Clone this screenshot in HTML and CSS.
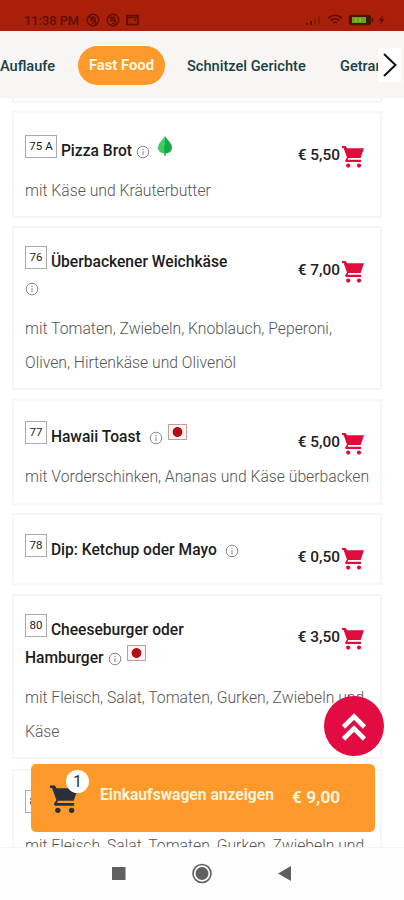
FILE: index.html
```html
<!DOCTYPE html>
<html lang="de">
<head>
<meta charset="utf-8">
<title>Speisekarte</title>
<link rel="stylesheet" href="styles.css">
</head>
<body>
<svg class="defs" width="0" height="0">
  <symbol id="cart" viewBox="0 0 22 23">
    <path fill="currentColor" d="M0 0h3.600l1.600 2.200H22L18.600 12H6.200l-.6 1.800H19v2.200H3.800L3 14.700l2-3.200L1.600 2H0z"/>
    <circle fill="currentColor" cx="6.200" cy="19.600" r="2.100"/><circle fill="currentColor" cx="17" cy="19.600" r="2.100"/>
  </symbol>
  <symbol id="info" viewBox="0 0 14 14">
    <circle cx="7" cy="7" r="5.800" fill="none" stroke="#888" stroke-width="1"/>
    <path d="M7 6.300v3.600M7 4v1.200" stroke="#888" stroke-width="1.100"/>
  </symbol>
  <symbol id="mute" viewBox="0 0 14 14">
    <circle cx="7" cy="7" r="5.800" fill="none" stroke="currentColor" stroke-width="1.400"/>
    <path d="M4.500 8.500c1 0 1-5 3-4.500s1.500 3 2 4.500M6 10.200h2M3 3l8 8" fill="none" stroke="currentColor" stroke-width="1.500"/>
  </symbol>
</svg>
<div class="screen">
  <header class="status">
    <span class="time">11:38 PM</span>
    <svg class="s-icon" width="14" height="14"><use href="#mute"/></svg>
    <svg class="s-icon" width="14" height="14"><use href="#mute"/></svg>
    <svg class="s-icon" width="13" height="12" viewBox="0 0 13 12"><path d="M1 1.500h11v9H1zM1 3.500h11M8 6h2" fill="none" stroke="currentColor" stroke-width="1.700"/></svg>
    <svg class="signals" width="80" height="14" viewBox="0 0 80 14">
      <path d="M1 12V10h2v2zM5 12V8h2v4z" fill="#5c1005"/><path d="M9 12V5h2v7zM13 12V3h2v9z" fill="#8f1b08"/>
      <path d="M23 5q7-5.500 14 0M25.500 7.500q4.500-3.500 9 0M28 10q2-1.500 4 0" fill="none" stroke="#5c1005" stroke-width="1.700"/>
      <rect x="44.500" y="2.500" width="21" height="9" rx="2.500" fill="#3c1808" stroke="#5c1005" stroke-width="1.500"/>
      <rect x="47" y="4" width="14" height="6" fill="#67a51c"/><path d="M51 5v4M55 5v4" stroke="#8bd32c"/>
      <path d="M67.500 5v4" stroke="#5c1005" stroke-width="1.500"/>
      <path d="M78 2l-4.500 5.500h2.500L75 12l4.500-6H77z" fill="#5c1005"/>
    </svg>
  </header>
  <nav class="tabs">
    <span class="tab tab-first">Auflaufe</span>
    <span class="tab active">Fast Food</span>
    <span class="tab tab-third">Schnitzel Gerichte</span>
    <span class="tab tab-last">Getranke</span>
    <span class="next"><svg width="22" height="34" viewBox="0 0 22 34"><path d="M4 6l11.500 11L4 28" fill="none" stroke="#111" stroke-width="2"/></svg></span>
  </nav>
  <main class="list">
    <section class="card stub"></section>
    <section class="card c75">
      <div class="info"><h2><span class="num">75 A</span> <span>Pizza Brot</span><svg class="i" width="14" height="14"><use href="#info"/></svg><svg class="leaf" width="16" height="20" viewBox="0 0 16 20"><path d="M8 0C6 4 1 7 1 11.500 1 16 5 17.500 8 17.500z" fill="#39cf64"/><path d="M8 0c2 4 7 7 7 11.500 0 4.500-4 6-7 6z" fill="#17aa45"/><path d="M8 9v11" stroke="#109b45" stroke-width="1.200"/></svg></h2>
      <p>mit Käse und Kräuterbutter</p></div>
      <div class="price">€ 5,50<svg width="22" height="23"><use href="#cart"/></svg></div>
    </section>
    <section class="card c76">
      <div class="info"><h2><span class="num">76</span> <span>Überbackener Weichkäse</span><br><svg class="i lead" width="14" height="14"><use href="#info"/></svg></h2>
      <p>mit Tomaten, Zwiebeln, Knoblauch, Peperoni,<br>Oliven, Hirtenkäse und Olivenöl</p></div>
      <div class="price">€ 7,00<svg width="22" height="23"><use href="#cart"/></svg></div>
    </section>
    <section class="card c77">
      <div class="info"><h2><span class="num">77</span> <span>Hawaii Toast</span><svg class="i far" width="14" height="14"><use href="#info"/></svg><span class="flag"></span></h2>
      <p>mit Vorderschinken, Ananas und Käse überbacken</p></div>
      <div class="price">€ 5,00<svg width="22" height="23"><use href="#cart"/></svg></div>
    </section>
    <section class="card c78">
      <div class="info"><h2><span class="num">78</span> <span>Dip: Ketchup oder Mayo</span><svg class="i far" width="14" height="14"><use href="#info"/></svg></h2></div>
      <div class="price">€ 0,50<svg width="22" height="23"><use href="#cart"/></svg></div>
    </section>
    <section class="card c80">
      <div class="info"><h2><span class="num">80</span> <span>Cheeseburger oder</span><br>Hamburger<svg class="i" width="14" height="14"><use href="#info"/></svg><span class="flag"></span></h2>
      <p>mit Fleisch, Salat, Tomaten, Gurken, Zwiebeln und<br>Käse</p></div>
      <div class="price">€ 3,50<svg width="22" height="23"><use href="#cart"/></svg></div>
    </section>
    <section class="card c81">
      <div class="info"><h2><span class="num">81</span></h2>
      <p>mit Fleisch, Salat, Tomaten, Gurken, Zwiebeln und</p></div>
    </section>
  </main>
  <button class="to-top"><svg width="60" height="60" viewBox="0 0 60 60"><path d="M19.500 31L30 20.500 40.500 31M19.500 43L30 32.500 40.500 43" fill="none" stroke="#fff" stroke-width="4.600"/></svg></button>
  <div class="basket">
    <span class="basket-icon"><svg width="28" height="30" viewBox="0 0 22 23"><use href="#cart" width="22" height="23"/></svg><span class="count">1</span></span>
    <span class="basket-label">Einkaufswagen anzeigen</span>
    <span class="basket-sum">€ 9,00</span>
  </div>
  <footer class="softkeys">
    <svg width="404" height="52" viewBox="0 0 404 52"><rect x="112" y="19" width="13.500" height="13" fill="#606060"/><circle cx="202" cy="25.500" r="9" fill="none" stroke="#606060" stroke-width="1.600"/><circle cx="202" cy="25.500" r="6.500" fill="#606060"/><path d="M278 25.500l13-7.500v15z" fill="#606060"/></svg>
  </footer>
</div>
</body>
</html>
```

FILE: styles.css
```css
* { box-sizing: border-box; }
body { margin: 0; font-family: Roboto, sans-serif; background: #fff; }
.defs { position: absolute; }
.screen { position: relative; width: 404px; height: 900px; overflow: hidden; display: flex; flex-direction: column; }

.status { height: 31px; flex: none; background: #aa1f08; color: #5c1005; display: flex; align-items: center; padding: 9px 19px 0 24px; }
.time { font-size: 12.8px; font-weight: 500; width: 62px; white-space: nowrap; }
.s-icon { margin-right: 6px; }
.signals { margin-left: auto; }

.tabs { position: relative; height: 67px; flex: none; background: #f8f5f2; display: flex; align-items: center; overflow: hidden; white-space: nowrap; color: #173f48; font-size: 14.6px; font-weight: 500; padding-top: 2px; }
.tab { flex: none; }
.tab-first { width: 78px; }
.active { width: 87px; height: 39px; border-radius: 20px; background: #fd9a2b; color: #fff7df; text-align: center; line-height: 38px; font-size: 14.8px; font-weight: 700; }
.tab-third { margin-left: 22px; width: 153px; }
.next { position: absolute; right: 3px; top: 17px; width: 23px; height: 34px; background: #fff; padding-left: 2px; }

.list { height: 749px; flex: none; overflow: hidden; padding: 0 22px 0 12px; display: flex; flex-direction: column; }
.card { flex: none; border: 2px solid #f6f6f6; display: flex; justify-content: space-between; padding: 0 16px 0 11px; }
.stub { height: 5px; border-top: 0; margin-bottom: 8px; }
.c75 { height: 107px; margin-bottom: 8px; padding-top: 23px; }
.c76 { height: 164px; margin-bottom: 9px; padding-top: 20px; }
.c77 { height: 106px; margin-bottom: 8px; padding-top: 22px; }
.c78 { height: 72px; margin-bottom: 9px; padding-top: 21px; }
.c80 { height: 165px; margin-bottom: 10px; padding-top: 20px; }
.c81 { height: 165px; padding-top: 21px; }
.info { width: 230px; white-space: nowrap; }
h2 { margin: 0; font-size: 15.6px; font-weight: 500; line-height: 28px; color: #1c1c1c; }
.num { display: inline-flex; align-items: center; justify-content: center; height: 23px; width: 22px; margin-top: -6px; padding: 0 0 1px; border: 1px solid #aaa; font-size: 11.5px; font-weight: 400; line-height: 20px; vertical-align: 6px; }
.c75 .num { width: 32px; }
.i { margin-left: 4px; vertical-align: -3px; }
.lead { margin-left: 0; vertical-align: -1px; }
.far { margin-left: 8px; }
.leaf { margin-left: 7px; vertical-align: 0; }
.flag { display: inline-block; width: 19px; height: 16px; margin-left: 5px; border: 1px solid #c99; background: radial-gradient(circle at center, #b30d16 0 4.5px, #fff4f2 5.3px); vertical-align: 2px; }
p { margin: 9px 0 0; font-size: 15.72px; font-weight: 300; line-height: 34px; color: #555; }
.c76 p { margin-top: 8px; }
.price { flex: none; display: flex; height: 23px; font-size: 15.4px; font-weight: 500; line-height: 18px; color: #222; margin-top: 10px; }
.c78 .price { margin-top: 12px; }
.c80 .price { margin-top: 12px; }
.c76 .price { margin-top: 13px; }
.price svg { margin: 0 0 0 2px; color: #df0b3b; }

.to-top { position: absolute; left: 324px; top: 696px; width: 60px; height: 60px; border: 0; padding: 0; border-radius: 50%; background: #e20b42; }
.basket { position: absolute; left: 31px; top: 764px; width: 344px; height: 68px; border-radius: 5px; background: #fd9a2b; color: #fff3d8; display: flex; align-items: center; padding: 0 0 6px 19px; font-weight: 700; white-space: nowrap; }
.basket-icon { position: relative; width: 50px; height: 30px; margin-top: 10px; color: #2a303b; }
.count { position: absolute; left: 16px; top: -15px; width: 23px; height: 23px; border-radius: 50%; background: #fff; text-align: center; line-height: 23px; font-size: 16px; font-weight: 400; }
.basket-label { width: 192px; font-size: 15.6px; }
.basket-sum { font-size: 17.3px; margin-top: 4px; }
.softkeys { height: 53px; flex: none; background: #fefefe; border-top: 1px solid #f4f4f4; }
```
